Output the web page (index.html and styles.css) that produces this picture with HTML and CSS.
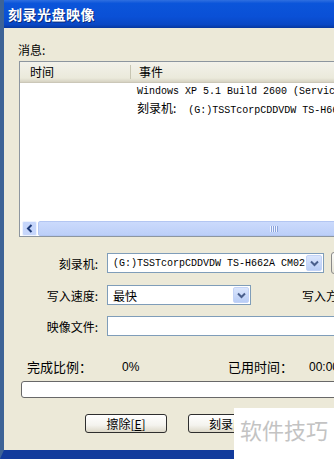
FILE: index.html
```html
<!DOCTYPE html>
<html lang="zh-CN">
<head>
    <meta charset="UTF-8">
    <meta name="viewport" content="width=device-width, initial-scale=1.0">
    <title>刻录光盘映像</title>
    <link rel="stylesheet" href="styles.css">
</head>
<body>
    <div class="window">
        <div class="titlebar">
            <span class="title">刻录光盘映像</span>
        </div>

        <div class="content">
            <div class="msg-label">消息:</div>

            <!-- message list -->
            <div class="listbox">
                <div class="list-head">
                    <div class="col col-time">时间</div>
                    <div class="col col-event">事件</div>
                </div>
                <div class="list-body">
                    <div class="row">
                        <span class="cell-time"></span>
                        <span class="cell-event mono">Windows XP 5.1 Build 2600 (Service Pack 3)</span>
                    </div>
                    <div class="row">
                        <span class="cell-time"></span>
                        <span class="cell-event"><span class="cjk">刻录机:</span><span class="mono">  (G:)TSSTcorpCDDVDW TS-H662A CM02</span></span>
                    </div>
                </div>
                <div class="hscroll">
                    <div class="scroll-btn">
                        <svg width="7" height="9" viewBox="0 0 7 9"><path d="M5.5 1 L2 4.5 L5.5 8" stroke="#1d3a78" stroke-width="2" fill="none"/></svg>
                    </div>
                    <div class="scroll-thumb"><span class="grip"></span></div>
                </div>
            </div>

            <!-- burn options -->
            <div class="form">
                <div class="form-row">
                    <label class="form-label">刻录机:</label>
                    <div class="combo combo-drive">
                        <span class="combo-text mono">(G:)TSSTcorpCDDVDW TS-H662A CM02</span>
                        <span class="combo-btn">
                            <svg width="9" height="7" viewBox="0 0 9 7"><path d="M1 1.5 L4.5 5 L8 1.5" stroke="#4a5f8c" stroke-width="2" fill="none"/></svg>
                        </span>
                    </div>
                    <div class="side-btn"></div>
                </div>
                <div class="form-row row-speed">
                    <label class="form-label">写入速度:</label>
                    <div class="combo combo-speed">
                        <span class="combo-text">最快</span>
                        <span class="combo-btn">
                            <svg width="9" height="7" viewBox="0 0 9 7"><path d="M1 1.5 L4.5 5 L8 1.5" stroke="#4a5f8c" stroke-width="2" fill="none"/></svg>
                        </span>
                    </div>
                    <label class="form-label-2">写入方式:</label>
                </div>
                <div class="form-row row-file">
                    <label class="form-label">映像文件:</label>
                    <div class="text-input"></div>
                </div>
            </div>

            <!-- progress -->
            <div class="progress-info">
                <span class="p-label">完成比例：</span>
                <span class="p-value">0%</span>
                <span class="p-label p-time">已用时间：</span>
                <span class="p-value">00:00:00</span>
            </div>
            <div class="progress-bar"></div>

            <div class="actions">
                <button class="btn">擦除[<u>E</u>]</button>
                <button class="btn">刻录[<u>B</u>]</button>
            </div>
        </div>
    </div>

    <div class="watermark">软件技巧</div>
</body>
</html>
```

FILE: styles.css
```css
* {
  box-sizing: border-box;
  margin: 0;
  padding: 0;
}

body {
  width: 334px;
  height: 459px;
  overflow: hidden;
  position: relative;
  background-color: #ece9d8;
  font-family: "Noto Sans CJK SC", "Liberation Sans", sans-serif;
  font-size: 12px;
  color: #000;
}

.mono {
  font-family: "Liberation Mono", "Noto Sans CJK SC", monospace;
  font-size: 10px;
  white-space: pre;
}

.cjk {
  font-family: "Noto Sans CJK SC", sans-serif;
  font-size: 12px;
}

.window {
  width: 440px;
  height: 459px;
  display: flex;
  flex-direction: column;
  border-left: 4px solid #3d6396;
  border-bottom: 9px solid #123b9c;
  background-color: #ece9d8;
}

.titlebar {
  height: 28px;
  flex-shrink: 0;
  display: flex;
  align-items: center;
  padding-left: 4px;
  background: linear-gradient(to bottom, #2f6fe0 0%, #0b55da 12%, #0a50d6 60%, #0947c4 88%, #06379e 100%);
}

.title {
  color: #fff;
  font-weight: bold;
  font-size: 14px;
  letter-spacing: 0.5px;
  text-shadow: 1px 1px 0 #0a2a7a;
}

.content {
  flex: 1;
  padding: 15px 0 0 15px;
}

.msg-label {
  height: 14px;
  line-height: 14px;
  margin-left: -1px;
}

/* list view */
.listbox {
  margin-top: 4px;
  width: 400px;
  height: 176px;
  border: 1px solid #8d969f;
  background-color: #fff;
  display: flex;
  flex-direction: column;
}

.list-head {
  height: 21px;
  display: flex;
  background: linear-gradient(to bottom, #f3f2ea 0%, #ebeadb 80%, #d6d2c2 100%);
  border-bottom: 1px solid #cbc7b8;
}

.col {
  line-height: 20px;
  white-space: nowrap;
}

.col-time {
  width: 111px;
  padding-left: 10px;
  border-right: 1px solid #c7c5b2;
  margin: 3px 0;
  line-height: 14px;
}

.col-event {
  padding-left: 8px;
}

.list-body {
  flex: 1;
  padding-top: 1px;
}

.row {
  display: flex;
  height: 16px;
  line-height: 16px;
  white-space: nowrap;
}

.cell-time {
  width: 117px;
}

.hscroll {
  height: 15px;
  margin: 0 2px 0 2px;
  display: flex;
}

.scroll-btn {
  width: 15px;
  height: 15px;
  display: flex;
  align-items: center;
  justify-content: center;
  background-color: #c6d6fb;
  border: 1px solid #eef3fe;
  border-radius: 2px;
}

.scroll-thumb {
  flex: 1;
  margin-left: 1px;
  background: linear-gradient(to bottom, #cbdafc, #bccff8);
  border: 1px solid #b3c6f2;
  border-radius: 2px;
  position: relative;
}

.grip {
  position: absolute;
  left: 231px;
  top: 4px;
  width: 8px;
  height: 6px;
  background: repeating-linear-gradient(to right, #eef3ff 0, #eef3ff 1px, #8aa3dc 1px, #8aa3dc 2px);
}

/* form rows */
.form {
  margin-top: 16px;
}

.form-row {
  display: flex;
  align-items: center;
  height: 20px;
}

.row-speed {
  margin-top: 12px;
}

.row-file {
  margin-top: 11px;
}

.form-label {
  width: 79px;
  text-align: right;
  margin-right: 9px;
  white-space: nowrap;
}

.form-label-2 {
  margin-left: 51px;
  white-space: nowrap;
}

.combo {
  height: 20px;
  display: flex;
  align-items: center;
  justify-content: space-between;
  background-color: #fff;
  border: 1px solid #7f9db9;
  padding: 1px 1px 1px 5px;
}

.combo-drive {
  width: 217px;
}

.combo-speed {
  width: 144px;
}

.combo-text {
  white-space: nowrap;
}

.combo-btn {
  width: 16px;
  height: 16px;
  display: flex;
  align-items: center;
  justify-content: center;
  background: linear-gradient(to bottom, #dbe6fd, #b9cdf6);
  border: 1px solid #c3d3f7;
  border-radius: 2px;
}

.side-btn {
  width: 24px;
  height: 22px;
  margin-left: 7px;
  border: 1px solid #8a8a8a;
  border-radius: 3px;
  background: linear-gradient(to bottom, #fbfbf8, #e6e3d4);
}

.text-input {
  width: 300px;
  height: 20px;
  background-color: #fff;
  border: 1px solid #7f9db9;
}

/* progress */
.progress-info {
  margin-top: 23px;
  height: 16px;
  line-height: 16px;
  display: flex;
  white-space: nowrap;
  font-size: 13px;
}

.p-label {
  width: 95px;
  margin-left: 8px;
}

.p-time {
  width: 81px;
  margin-left: 0;
}

.p-value {
  width: 106px;
  font-family: "Liberation Sans", sans-serif;
  font-size: 12px;
}

.progress-bar {
  margin: 6px 0 0 2px;
  width: 400px;
  height: 17px;
  background-color: #fff;
  border: 1px solid #686868;
  border-radius: 3px;
}

.actions {
  margin: 16px 0 0 66px;
  display: flex;
  gap: 21px;
}

.btn {
  width: 82px;
  height: 19px;
  font-family: "Noto Sans CJK SC", "Liberation Sans", sans-serif;
  font-size: 12px;
  line-height: 16px;
  color: #000;
  border: 1px solid #2e2e2e;
  border-radius: 3px;
  background: linear-gradient(to bottom, #ffffff 0%, #f4f3ee 60%, #dcd8c8 100%);
}

.btn u {
  text-decoration: underline;
}

/* site watermark over the corner */
.watermark {
  position: absolute;
  left: 234px;
  top: 408px;
  width: 100px;
  height: 51px;
  background-color: #fff;
  color: #c3c3c3;
  font-size: 22px;
  line-height: 26px;
  padding: 8px 0 0 6px;
  white-space: nowrap;
}
```
